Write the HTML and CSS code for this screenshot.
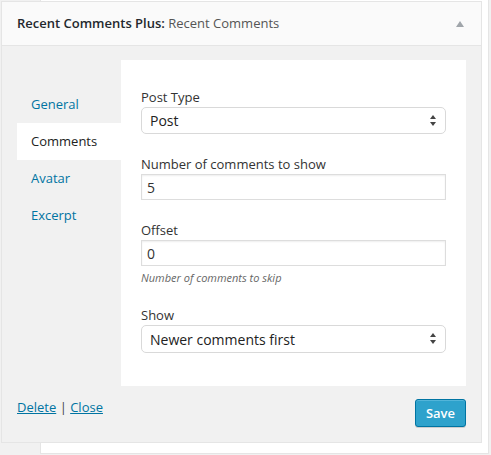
FILE: index.html
```html
<!DOCTYPE html>
<html lang="en">
<head>
<meta charset="utf-8">
<title>Recent Comments Plus widget</title>
<link rel="stylesheet" href="styles.css">
</head>
<body>
<div class="sidebar">
  <div class="widget">
    <div class="widget-top">
      <h3 class="widget-title">Recent Comments Plus: <span class="in-title">Recent Comments</span></h3>
      <svg class="toggle" width="8" height="6" viewBox="0 0 8 6"><path d="M4 0 L8 6 L0 6 Z" fill="#a0a5aa"/></svg>
    </div>
    <div class="widget-inside">
      <div class="tabs-wrap">
        <ul class="tabs">
          <li><a href="#">General</a></li>
          <li class="active"><a href="#">Comments</a></li>
          <li><a href="#">Avatar</a></li>
          <li><a href="#">Excerpt</a></li>
        </ul>
        <div class="tab-panel">
          <div class="field">
            <label class="label">Post Type</label>
            <div class="select-wrap">
              <select class="select"><option>Post</option></select>
              <svg class="select-arrows" width="6" height="11" viewBox="0 0 6 11"><path d="M3 0 L6 4 L0 4 Z M3 11 L6 7 L0 7 Z" fill="#444"/></svg>
            </div>
          </div>
          <div class="field">
            <label class="label">Number of comments to show</label>
            <input class="input" type="text" value="5">
          </div>
          <div class="field">
            <label class="label">Offset</label>
            <input class="input" type="text" value="0">
            <p class="description">Number of comments to skip</p>
          </div>
          <div class="field">
            <label class="label">Show</label>
            <div class="select-wrap">
              <select class="select select-tall"><option>Newer comments first</option></select>
              <svg class="select-arrows" width="6" height="11" viewBox="0 0 6 11"><path d="M3 0 L6 4 L0 4 Z M3 11 L6 7 L0 7 Z" fill="#444"/></svg>
            </div>
          </div>
        </div>
      </div>
      <div class="widget-control">
        <div class="links"><a href="#">Delete</a> | <a href="#">Close</a></div>
        <button class="button-primary" type="button">Save</button>
      </div>
    </div>
  </div>
</div>
</body>
</html>
```
FILE: styles.css
```css
body {
  margin: 0;
  background: #f1f1f1;
  font-family: "Open Sans", sans-serif;
  font-size: 13px;
  color: #444;
}

.sidebar {
  display: flow-root;
  margin-left: 40px;
  width: 447px;
  background: #fff;
  border: 1px solid #e5e5e5;
  border-top: 0;
  padding-bottom: 10px;
}

.widget {
  margin-left: -40px;
  margin-top: 1px;
  width: 479px;
  border: 1px solid #e5e5e5;
  background: #f1f1f1;
}

.widget-top {
  display: flex;
  justify-content: space-between;
  align-items: center;
  height: 43px;
  padding: 0 17px 0 15px;
  background: #fafafa;
  border-bottom: 1px solid #e5e5e5;
}

.widget-title {
  margin: 0;
  font-size: 13px;
  font-weight: 600;
  line-height: 1;
  color: #23282d;
}

.in-title {
  font-weight: 400;
  color: #555;
}

.toggle {
  display: block;
}

.widget-inside {
  padding: 14px 15px 15px;
}

.tabs-wrap {
  display: flex;
}

.tabs {
  list-style: none;
  margin: 0;
  padding: 26px 0 0;
  width: 104px;
  flex: none;
}

.tabs a {
  display: block;
  height: 37px;
  line-height: 37px;
  padding-left: 14px;
  color: #0074a2;
  text-decoration: none;
}

.tabs .active a {
  background: #fff;
  color: #222;
}

.tab-panel {
  flex: 1;
  background: #fff;
  padding: 28px 20px 33px;
}

.field {
  margin-bottom: 21px;
}

.field:last-child {
  margin-bottom: 0;
}

.label {
  display: block;
  line-height: 18px;
  margin-bottom: 1px;
  color: #333;
}

.input {
  display: block;
  box-sizing: border-box;
  width: 100%;
  height: 26px;
  margin: 0;
  padding: 0 5px;
  border: 1px solid #ddd;
  box-shadow: inset 0 1px 2px rgba(0, 0, 0, 0.07);
  font-family: "Open Sans", sans-serif;
  font-size: 14px;
  color: #333;
  background: #fff;
  outline: none;
}

.select-wrap {
  position: relative;
}

.select {
  display: block;
  box-sizing: border-box;
  width: 100%;
  height: 27px;
  margin: 0;
  padding: 0 8px;
  border: 1px solid #d9d9d9;
  border-radius: 5px;
  background: #fff;
  appearance: none;
  -webkit-appearance: none;
  font-family: "Open Sans", sans-serif;
  font-size: 14px;
  color: #222;
  outline: none;
}

.select-tall {
  height: 28px;
}

.select-arrows {
  position: absolute;
  right: 10px;
  top: 8px;
  pointer-events: none;
}

.description {
  margin: 4px 0 5px;
  font-size: 11px;
  line-height: 15px;
  font-style: italic;
  color: #666;
}

.widget-control {
  display: flex;
  justify-content: space-between;
  align-items: flex-start;
  padding-top: 12px;
}

.links {
  line-height: 18px;
  color: #444;
}

.links a {
  color: #0074a2;
}

.button-primary {
  margin-top: 1px;
  height: 28px;
  padding: 0 10px;
  background: #2ea2cc;
  border: 1px solid #0074a2;
  border-radius: 3px;
  color: #fff;
  font-family: "Open Sans", sans-serif;
  font-size: 13px;
  font-weight: 600;
  box-shadow: inset 0 1px 0 rgba(120, 200, 230, 0.5), 0 1px 0 rgba(0, 0, 0, 0.15);
}
```
